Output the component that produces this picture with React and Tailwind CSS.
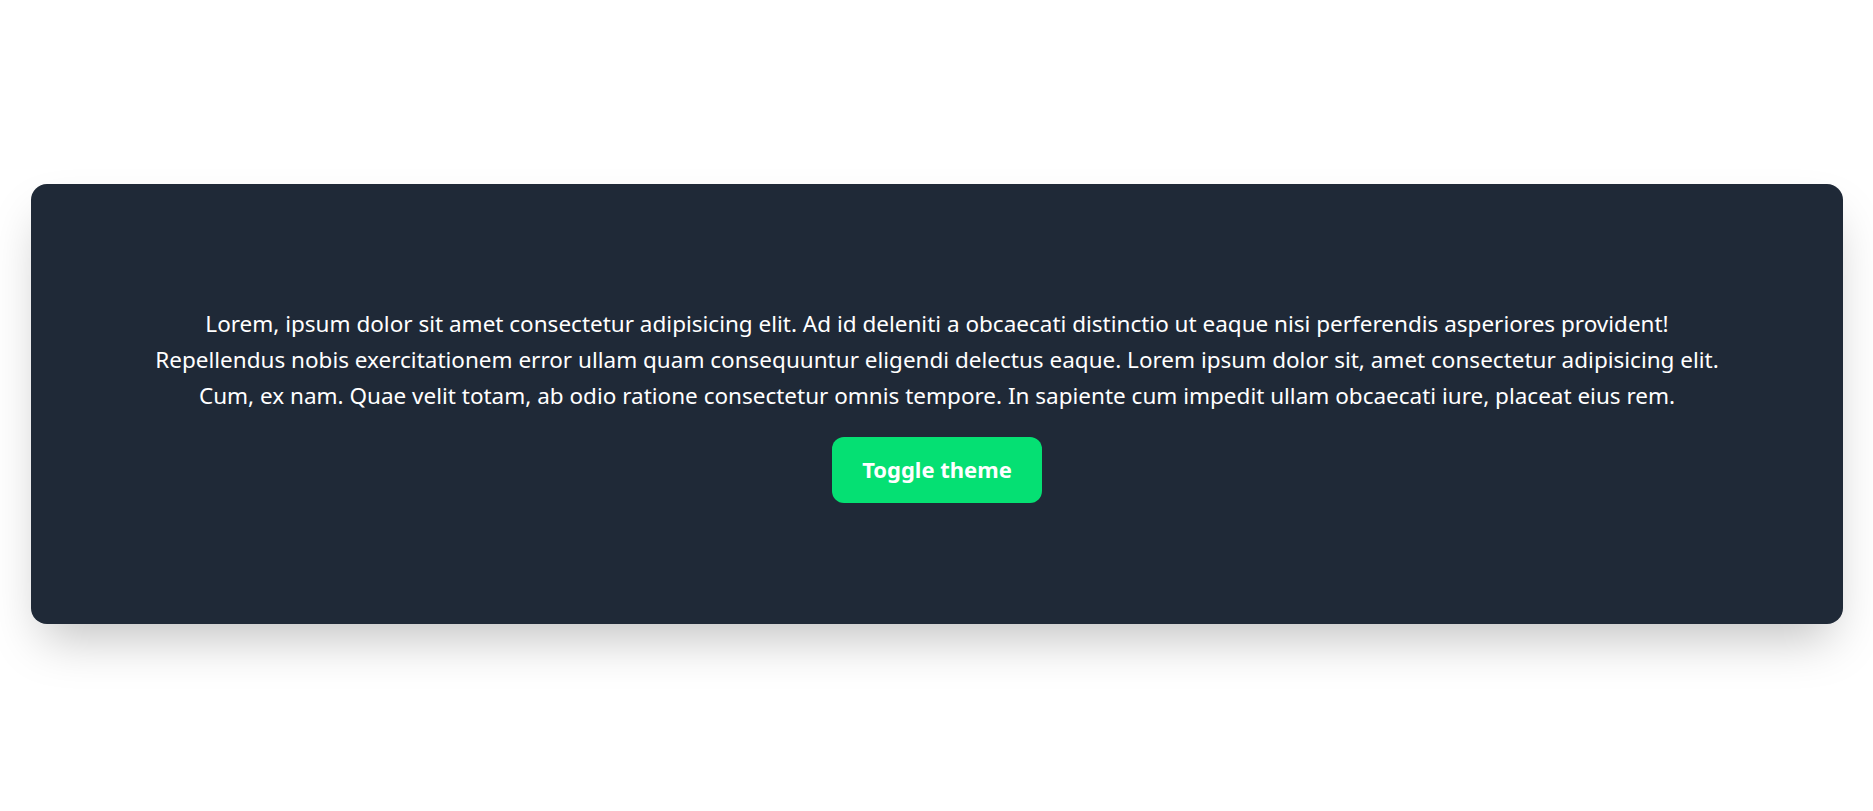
export default function App() {
  return (
    <div className="min-h-screen w-full bg-white flex items-center pl-[31px] pr-[30px] pb-[3px] font-['Noto_Sans',sans-serif]">
      <div className="w-full h-[440px] rounded-2xl bg-[#1f2937] shadow-2xl flex flex-col items-center justify-center text-center">
        <p className="text-[22.5px] leading-9 text-white">
          Lorem, ipsum dolor sit amet consectetur adipisicing elit. Ad id deleniti a obcaecati distinctio ut eaque nisi perferendis asperiores provident!
          <br />
          Repellendus nobis exercitationem error ullam quam consequuntur eligendi delectus eaque. Lorem ipsum dolor sit, amet consectetur adipisicing elit.
          <br />
          Cum, ex nam. Quae velit totam, ab odio ratione consectetur omnis tempore. In sapiente cum impedit ullam obcaecati iure, placeat eius rem.
        </p>
        <button className="mt-[23px] h-[66px] px-[30px] rounded-xl bg-[#05e073] text-white text-[22px] font-bold">
          Toggle theme
        </button>
      </div>
    </div>
  );
}
